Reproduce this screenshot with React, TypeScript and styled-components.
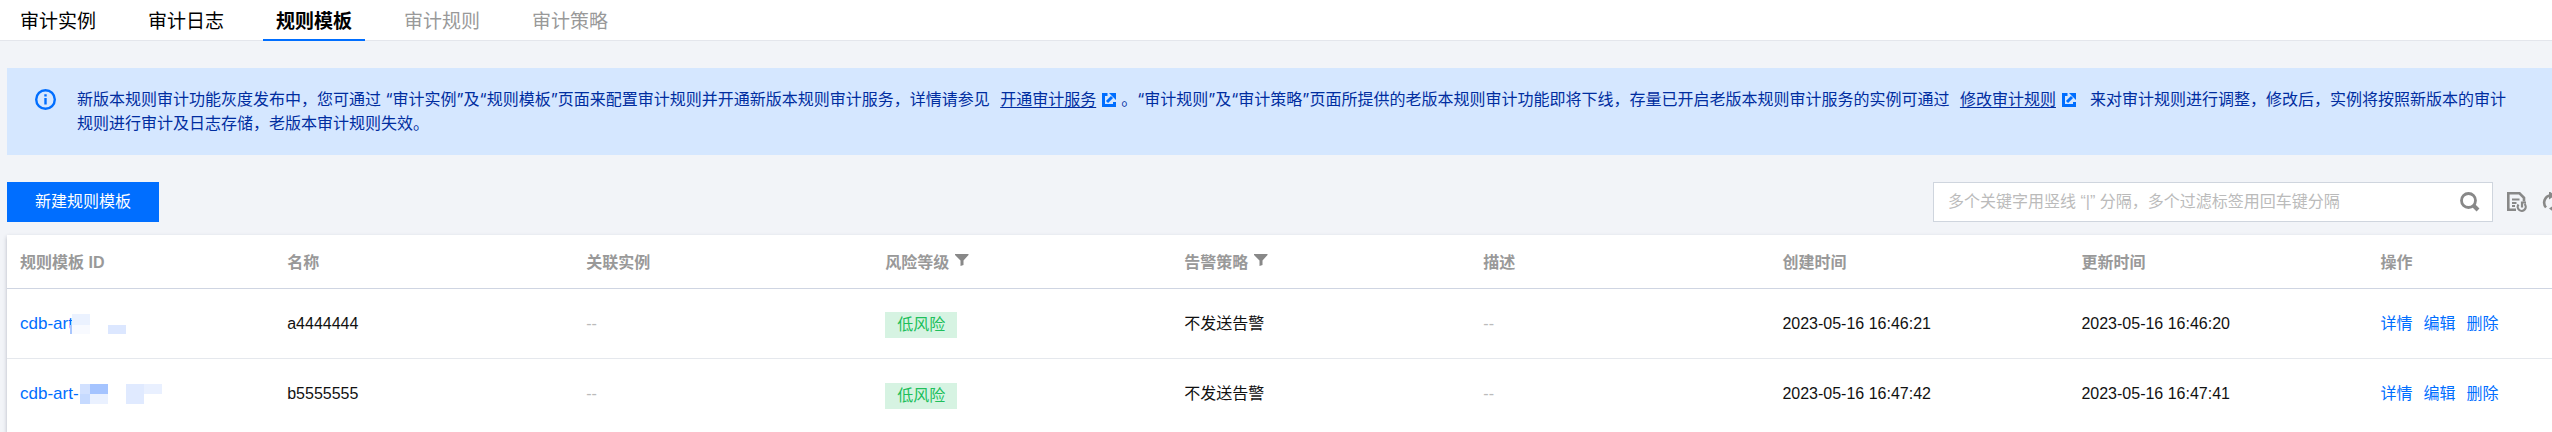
import React from 'react';
import styled, { createGlobalStyle } from 'styled-components';

const GlobalStyle = createGlobalStyle`
  *, *::before, *::after { box-sizing: border-box; }
  body {
    margin: 0;
    background: #f2f4f8;
    color: #111;
    font-family: "Liberation Sans", "Noto Sans CJK SC", sans-serif;
    font-size: 16px;
    line-height: 24px;
    overflow-x: hidden;
  }
  button, input { font: inherit; }
`;

const Page = styled.div`
  display: flex;
  flex-direction: column;
  min-height: 100vh;
  overflow: hidden;
`;

const TabBar = styled.nav`
  display: flex;
  gap: 26px;
  height: 41px;
  padding-left: 7px;
  background: #fff;
  border-bottom: 1px solid #e4e6ec;
`;

const Tab = styled.button<{ $active?: boolean }>`
  height: 41px;
  padding: 4px 13px 0;
  border: 0;
  border-bottom: 2px solid ${p => (p.$active ? '#006eff' : 'transparent')};
  background: none;
  color: #000;
  font-size: 19px;
  line-height: 24px;
  font-weight: ${p => (p.$active ? 700 : 400)};
  white-space: nowrap;
  &:disabled { color: #999; }
`;

const Content = styled.main`
  display: flex;
  flex: 1;
  flex-direction: column;
  padding: 27px 0 0 7px;
`;

const Notice = styled.section`
  display: flex;
  gap: 21px;
  padding: 19px 36px 20px 28px;
  background: #d5e7ff;
  color: #002da0;
`;

const NoticeIcon = styled.svg`
  flex: none;
  width: 21px;
  height: 21px;
  margin-top: 2px;
`;

const NoticeText = styled.p`
  flex: 1;
  margin: 0;
  font-family: Inter, "Noto Sans CJK SC", sans-serif;
`;

const NoticeLink = styled.a`
  margin-left: 6px;
  color: inherit;
  text-decoration: underline;
  text-underline-offset: 2px;
`;

const ExternalIcon = styled.svg`
  width: 14px;
  height: 14px;
  margin: 0 5px 0 6px;
  vertical-align: -2px;
`;

const Toolbar = styled.div`
  display: flex;
  align-items: center;
  justify-content: space-between;
  margin: 27px 0 13px;
`;

const PrimaryButton = styled.button`
  height: 40px;
  padding: 0 28px;
  border: 0;
  background: #006eff;
  color: #fff;
`;

const Tools = styled.div`
  display: flex;
  align-items: center;
  gap: 14px;
  margin-right: -10px;
`;

const SearchBox = styled.div`
  display: flex;
  align-items: center;
  width: 560px;
  height: 40px;
  padding: 0 12px 0 14px;
  border: 1px solid #cfd5de;
  background: #fff;
`;

const SearchInput = styled.input`
  flex: 1;
  min-width: 0;
  padding: 0;
  border: 0;
  outline: 0;
  background: none;
  &::placeholder { color: #bbb; opacity: 1; }
`;

const IconButton = styled.button`
  display: flex;
  flex: none;
  padding: 0;
  border: 0;
  background: none;
  color: #888;
`;

const ToolGroup = styled.div`
  display: flex;
  gap: 15px;
`;

const Card = styled.div`
  flex: 1;
  background: #fff;
  box-shadow: 0 2px 4px rgba(54, 58, 80, 0.32);
`;

const Table = styled.table`
  width: 100%;
  table-layout: fixed;
  border-collapse: separate;
  border-spacing: 0;
`;

const Column = styled.col<{ $width?: string }>`
  width: ${p => p.$width ?? 'auto'};
`;

const HeadCell = styled.th`
  height: 54px;
  padding: 2px 0 0 13px;
  border-bottom: 1px solid #cfd5e2;
  color: #999;
  font-weight: 700;
  text-align: left;
`;

const HeadLabel = styled.span`
  display: flex;
  align-items: center;
  gap: 6px;
`;

const FilterButton = styled(IconButton)`
  margin-bottom: 6px;
`;

const Row = styled.tr`
  &:not(:last-child) td { border-bottom: 1px solid #e5e8ed; }
`;

const Cell = styled.td<{ $muted?: boolean }>`
  height: 70px;
  padding: 0 0 0 13px;
  color: ${p => (p.$muted ? '#bbb' : 'inherit')};
`;

const IdLink = styled.a`
  position: relative;
  color: #006eff;
  font-size: 17px;
  text-decoration: none;
`;

const Mosaic = styled.svg`
  position: absolute;
  top: 0;
  left: 50px;
  width: 92px;
  height: 20px;
`;

const Tag = styled.span`
  display: block;
  width: max-content;
  height: 26px;
  margin-top: 3px;
  padding: 0 12px;
  background: #d6f3e2;
  color: #20bf5b;
  line-height: 26px;
`;

const Actions = styled.div`
  display: flex;
  gap: 11px;
`;

const ActionLink = styled.a`
  color: #006eff;
  text-decoration: none;
`;

type Block = [number, number, number, number, string];

interface Template {
  id: string;
  mask: Block[];
  name: string;
  created: string;
  updated: string;
}

const templates: Template[] = [
  {
    id: 'cdb-art',
    mask: [
      [0, 11, 2, 9, '#a9c6fd'],
      [2, 0, 18, 11, '#ebf2ff'],
      [2, 11, 18, 9, '#f8faff'],
      [38, 11, 18, 9, '#dce7ff'],
    ],
    name: 'a4444444',
    created: '2023-05-16 16:46:21',
    updated: '2023-05-16 16:46:20',
  },
  {
    id: 'cdb-art-',
    mask: [
      [10, 0, 10, 10, '#d2e1ff'],
      [20, 0, 18, 10, '#a5c4ff'],
      [10, 10, 10, 10, '#c6daff'],
      [20, 10, 18, 10, '#eaf1ff'],
      [56, 0, 18, 20, '#e0eaff'],
      [74, 0, 18, 10, '#e9f0ff'],
    ],
    name: 'b5555555',
    created: '2023-05-16 16:47:42',
    updated: '2023-05-16 16:47:41',
  },
];

const columns = [
  { label: '规则模板 ID', width: '10.5%' },
  { label: '名称', width: '11.75%' },
  { label: '关联实例', width: '11.75%' },
  { label: '风险等级', width: '11.75%', filter: true },
  { label: '告警策略', width: '11.75%', filter: true },
  { label: '描述', width: '11.75%' },
  { label: '创建时间', width: '11.75%' },
  { label: '更新时间', width: '11.75%' },
  { label: '操作' },
];

const OpenInNew = () => (
  <ExternalIcon viewBox="0 0 14 14" fill="none" stroke="#006eff" strokeWidth="3" aria-hidden="true">
    <path d="M5.500 1.500h-4v11h11V9" />
    <path d="M5 9L10 4" />
    <path d="M7 0h7v7z" fill="#006eff" stroke="none" />
  </ExternalIcon>
);

export default function App() {
  return (
    <Page>
      <GlobalStyle />
      <TabBar>
        <Tab>审计实例</Tab>
        <Tab>审计日志</Tab>
        <Tab $active aria-current="page">规则模板</Tab>
        <Tab disabled>审计规则</Tab>
        <Tab disabled>审计策略</Tab>
      </TabBar>
      <Content>
        <Notice>
          <NoticeIcon viewBox="0 0 21 21" aria-hidden="true">
            <circle cx="10.5" cy="10.5" r="9.300" fill="none" stroke="#006eff" strokeWidth="2.400" />
            <path d="M9.300 5.300h2.400v2.200H9.300zM9.300 9h2.400v6.500H9.300z" fill="#006eff" />
          </NoticeIcon>
          <NoticeText>
            新版本规则审计功能灰度发布中，您可通过 “审计实例”及“规则模板”页面来配置审计规则并开通新版本规则审计服务，详情请参见{' '}
            <NoticeLink href="#enable">开通审计服务</NoticeLink>
            <OpenInNew />
            。“审计规则”及“审计策略”页面所提供的老版本规则审计功能即将下线，存量已开启老版本规则审计服务的实例可通过{' '}
            <NoticeLink href="#modify">修改审计规则</NoticeLink>
            <OpenInNew />
            {'\u00a0 '}来对审计规则进行调整，修改后，实例将按照新版本的审计规则进行审计及日志存储，老版本审计规则失效。
          </NoticeText>
        </Notice>
        <Toolbar>
          <PrimaryButton>新建规则模板</PrimaryButton>
          <Tools>
            <SearchBox>
              <SearchInput aria-label="搜索" placeholder="多个关键字用竖线 “|” 分隔，多个过滤标签用回车键分隔" />
              <IconButton aria-label="搜索">
                <svg width="20" height="20" viewBox="0 0 20 20" fill="none" stroke="currentColor">
                  <circle cx="8.500" cy="8.500" r="7" strokeWidth="2.800" />
                  <path d="M13 13l5 5" strokeWidth="4" />
                </svg>
              </IconButton>
            </SearchBox>
            <ToolGroup>
              <IconButton aria-label="导出">
                <svg width="20" height="20" viewBox="0 0 20 20" fill="none" stroke="currentColor" strokeWidth="2.600">
                  <path d="M9 17.700H1.300V1.300H12.500l4.500 4.500V9.500" />
                  <path d="M5 7.500h7.500M5 11h4.500M5 14h3" strokeWidth="2" />
                  <path d="M17.500 12a4 4 0 1 1-6 .5M15 15.500v-5h4" strokeWidth="2.200" />
                </svg>
              </IconButton>
              <IconButton aria-label="刷新">
                <svg width="20" height="20" viewBox="0 0 20 20" fill="none" stroke="currentColor" strokeWidth="2.600">
                  <path d="M4 15.500A7.500 7.500 0 0 1 8.500 3.200M16 4.500a7.500 7.500 0 0 1-4.500 12.300" />
                  <path d="M7 -1l6 4.500-6 4zM13 21l-6-4.500 6-4z" fill="currentColor" stroke="none" />
                </svg>
              </IconButton>
            </ToolGroup>
          </Tools>
        </Toolbar>
        <Card>
          <Table>
            <colgroup>
              {columns.map(c => <Column key={c.label} $width={c.width} />)}
            </colgroup>
            <thead>
              <tr>
                {columns.map(c => (
                  <HeadCell key={c.label} scope="col">
                    <HeadLabel>
                      {c.label}
                      {c.filter && (
                        <FilterButton aria-label={`筛选${c.label}`}>
                          <svg width="14" height="12" viewBox="0 0 14 12" fill="currentColor">
                            <path d="M0 0h13.500v1L8.500 6.500V11l-3 1V6.500L0 1z" />
                          </svg>
                        </FilterButton>
                      )}
                    </HeadLabel>
                  </HeadCell>
                ))}
              </tr>
            </thead>
            <tbody>
              {templates.map(t => (
                <Row key={t.name}>
                  <Cell>
                    <IdLink href="#template">
                      {t.id}
                      <Mosaic viewBox="0 0 92 20" aria-hidden="true">
                        {t.mask.map(([x, y, w, h, fill]) => (
                          <rect key={`${x}-${y}`} x={x} y={y} width={w} height={h} fill={fill} />
                        ))}
                      </Mosaic>
                    </IdLink>
                  </Cell>
                  <Cell>{t.name}</Cell>
                  <Cell $muted>--</Cell>
                  <Cell><Tag>低风险</Tag></Cell>
                  <Cell>不发送告警</Cell>
                  <Cell $muted>--</Cell>
                  <Cell>{t.created}</Cell>
                  <Cell>{t.updated}</Cell>
                  <Cell>
                    <Actions>
                      <ActionLink href="#detail">详情</ActionLink>
                      <ActionLink href="#edit">编辑</ActionLink>
                      <ActionLink href="#delete">删除</ActionLink>
                    </Actions>
                  </Cell>
                </Row>
              ))}
            </tbody>
          </Table>
        </Card>
      </Content>
    </Page>
  );
}
